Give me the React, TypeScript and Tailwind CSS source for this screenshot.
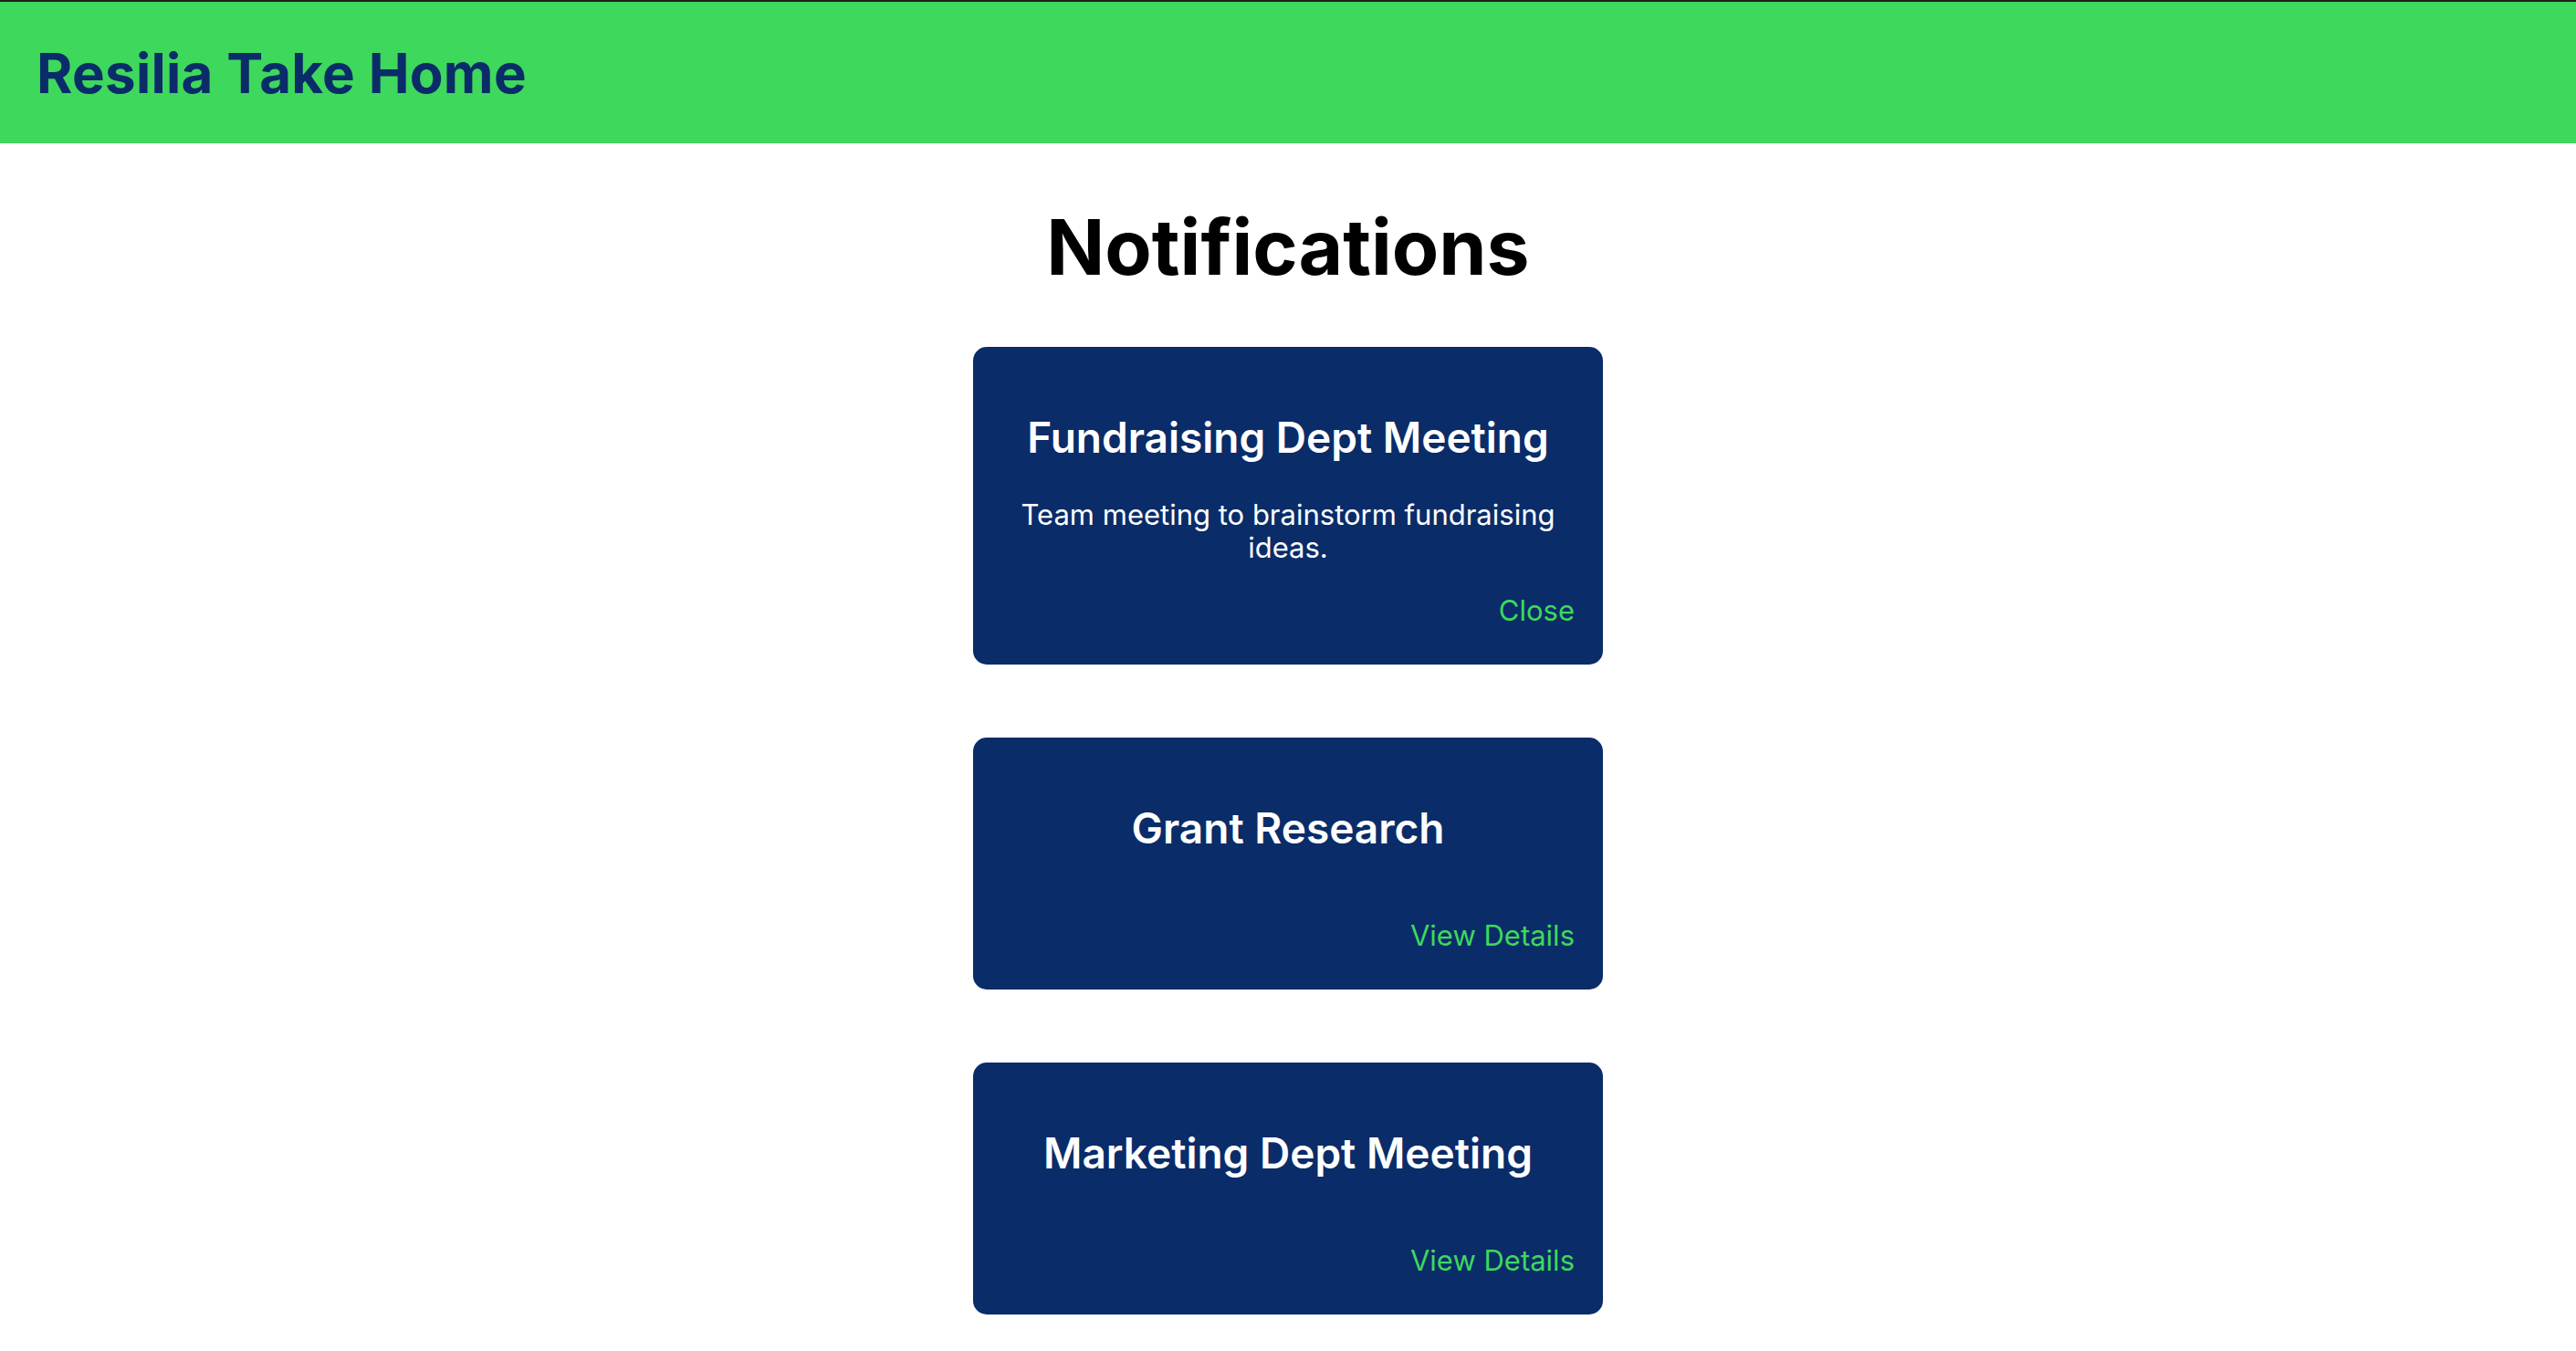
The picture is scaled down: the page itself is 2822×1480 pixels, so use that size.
import React from "react";

type Note = { title: string; description?: string; action: string };

const notes: Note[] = [
  {
    title: "Fundraising Dept Meeting",
    description: "Team meeting to brainstorm fundraising ideas.",
    action: "Close",
  },
  { title: "Grant Research", action: "View Details" },
  { title: "Marketing Dept Meeting", action: "View Details" },
];

function Card({ note }: { note: Note }) {
  return (
    <div className="w-[690px] rounded-[15px] bg-[#0a2c69] px-[31px] pt-[72px] pb-[41px] flex flex-col">
      <h2 className="text-center text-white font-semibold text-[46px] leading-[54px] mb-[40px]">
        {note.title}
      </h2>
      {note.description && (
        <p className="text-center text-white text-[31px] leading-[36px] px-[10px]">
          {note.description}
        </p>
      )}
      <div className="flex justify-end mt-[33px]">
        <button className="text-[#3ed85c] text-[31px] leading-[36px]">{note.action}</button>
      </div>
    </div>
  );
}

export default function App() {
  return (
    <div
      className="min-h-[1480px] bg-white"
      style={{ fontFamily: "Inter, 'Noto Sans', sans-serif" }}
    >
      <header className="h-[157px] bg-[#3ed85c] border-t-2 border-[#1e1e1e] flex items-center pl-[40px]">
        <h1 className="text-[#0a2c69] font-bold text-[60px] leading-none tracking-[0.005em]">
          Resilia Take Home
        </h1>
      </header>
      <main className="flex flex-col items-center">
        <h1 className="text-black font-bold text-[84px] leading-[104px] mt-[62px] mb-[57px]">
          Notifications
        </h1>
        <div className="flex flex-col items-center gap-[80px]">
          {notes.map((n) => (
            <Card key={n.title} note={n} />
          ))}
        </div>
      </main>
    </div>
  );
}
